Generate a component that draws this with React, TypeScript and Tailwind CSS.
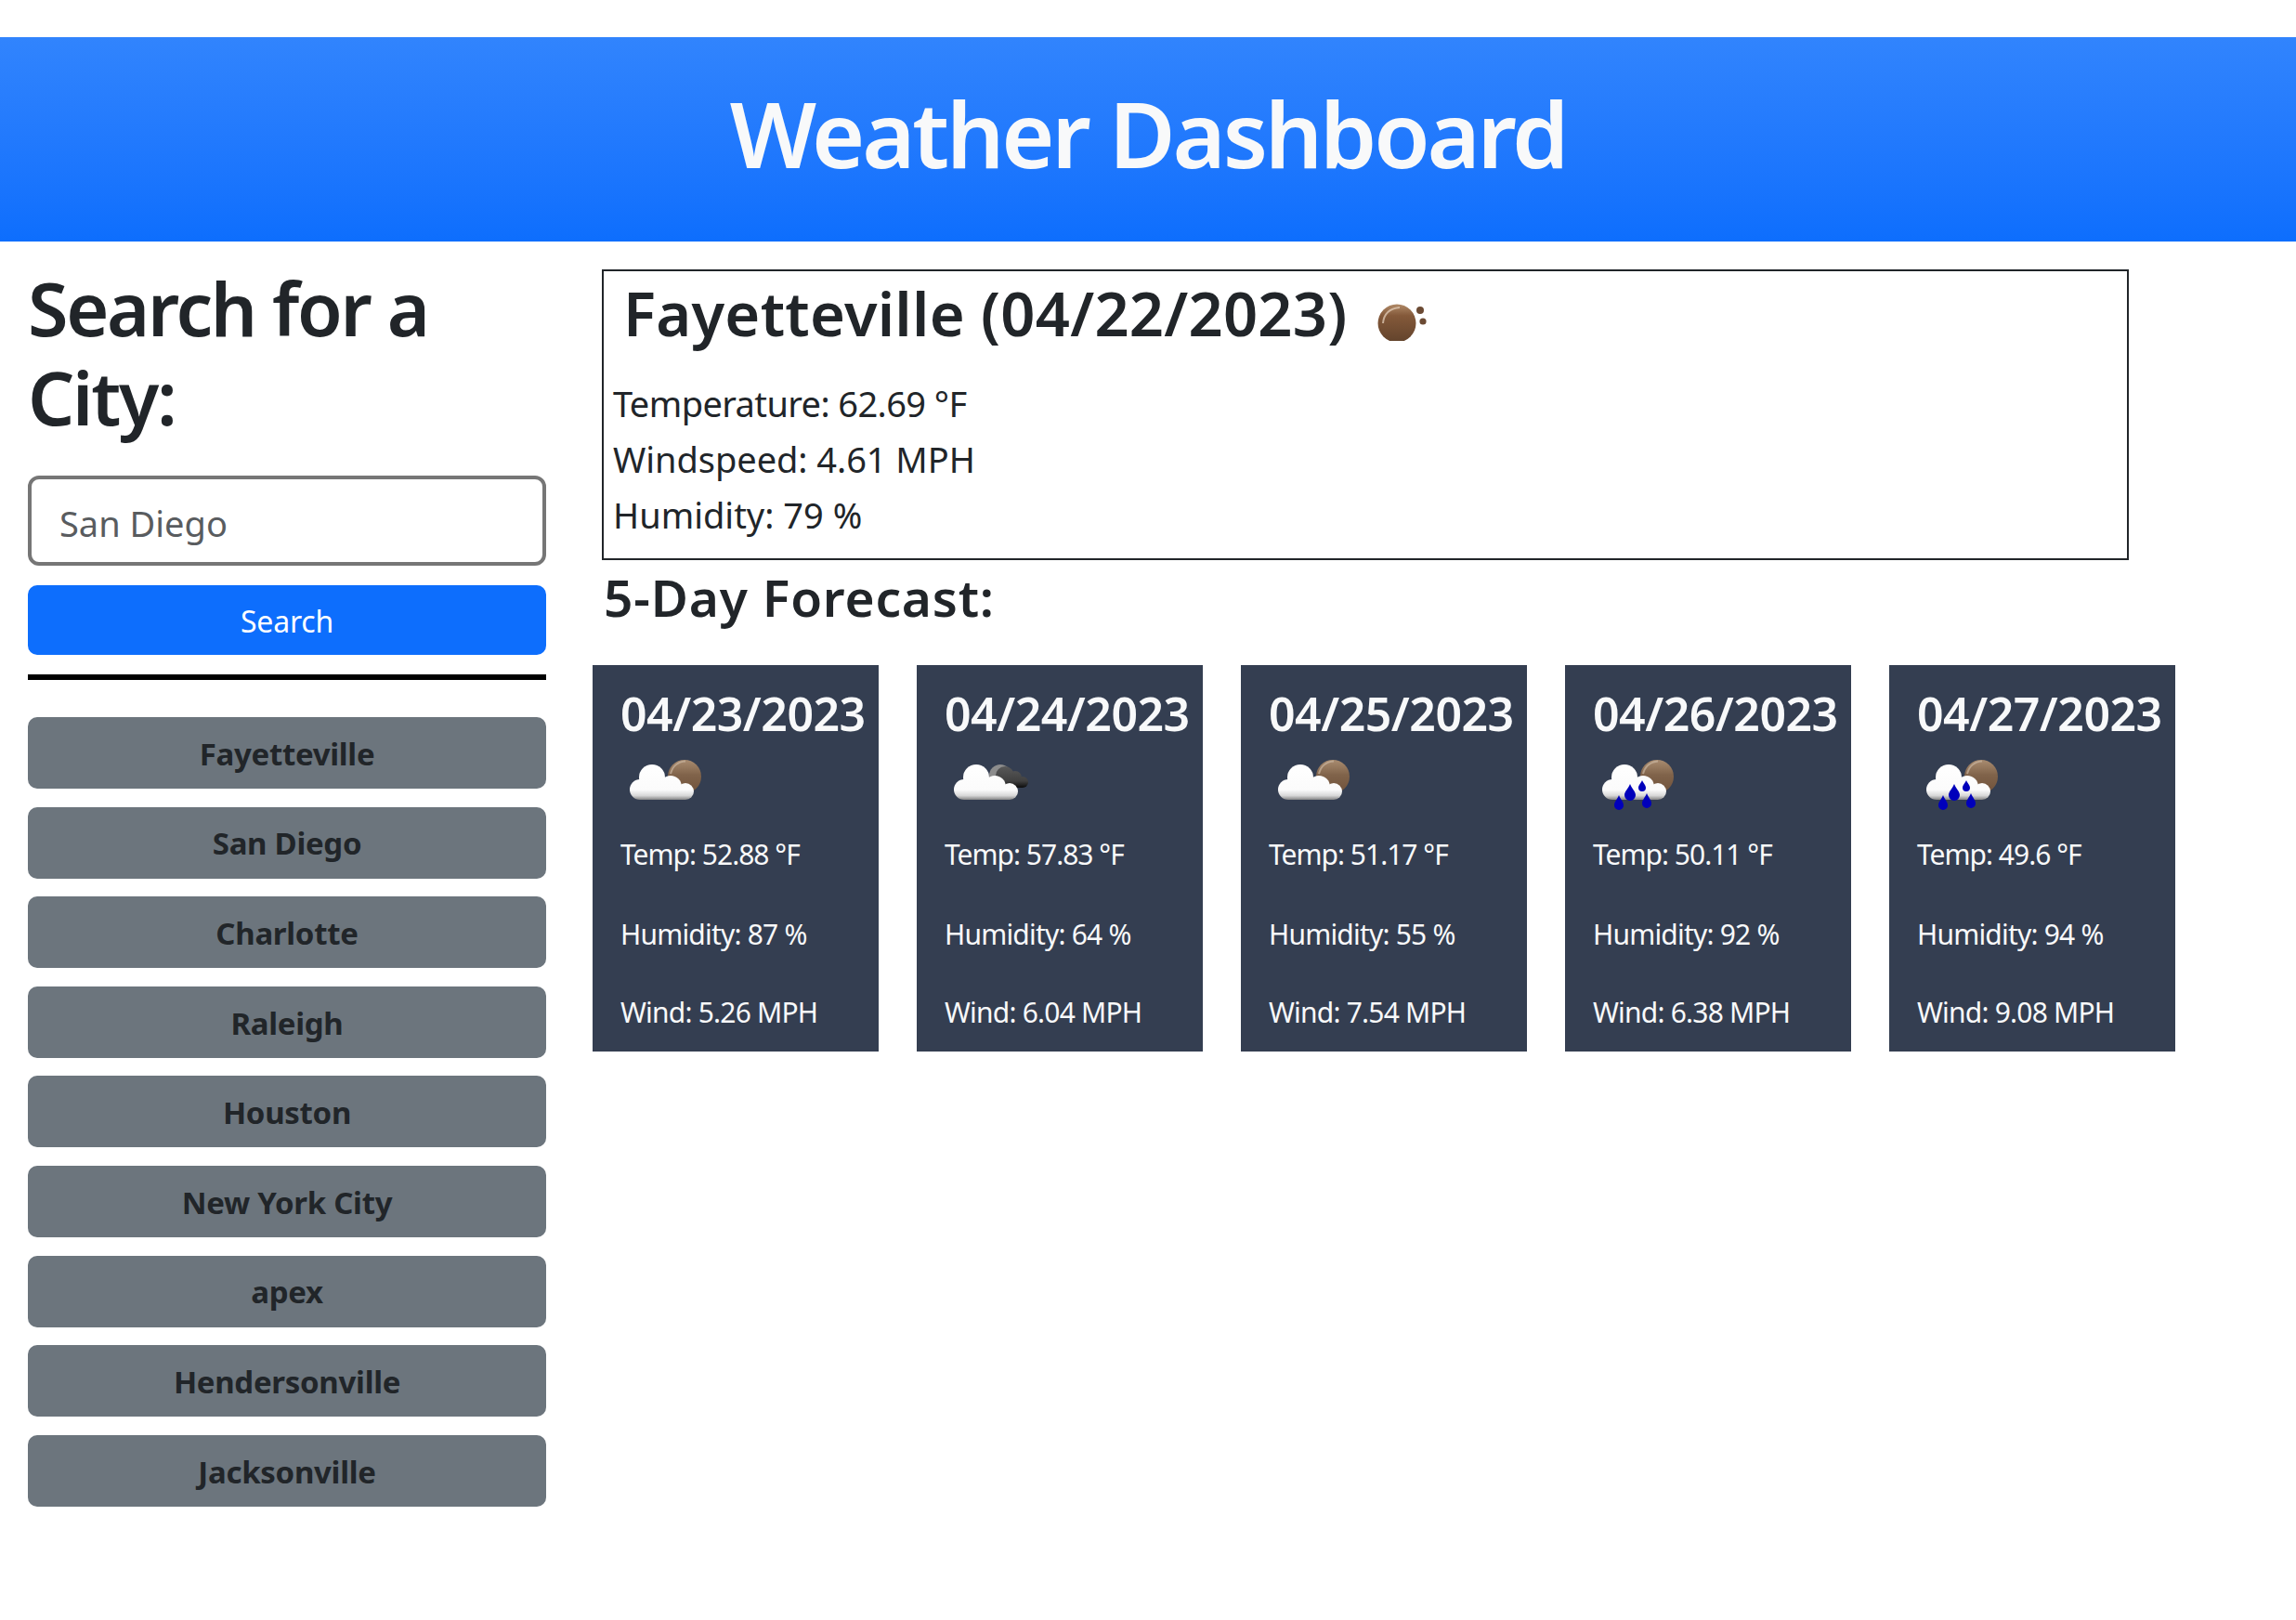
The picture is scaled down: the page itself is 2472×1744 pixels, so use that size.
import React from 'react';

type Forecast = {
  date: string;
  temp: string;
  humidity: string;
  wind: string;
  icon: 'cloudy' | 'overcast' | 'rain';
};

const cities = ['Fayetteville', 'San Diego', 'Charlotte', 'Raleigh', 'Houston', 'New York City', 'apex', 'Hendersonville', 'Jacksonville'];

const forecast: Forecast[] = [
  { date: '04/23/2023', temp: '52.88', humidity: '87', wind: '5.26', icon: 'cloudy' },
  { date: '04/24/2023', temp: '57.83', humidity: '64', wind: '6.04', icon: 'overcast' },
  { date: '04/25/2023', temp: '51.17', humidity: '55', wind: '7.54', icon: 'cloudy' },
  { date: '04/26/2023', temp: '50.11', humidity: '92', wind: '6.38', icon: 'rain' },
  { date: '04/27/2023', temp: '49.6', humidity: '94', wind: '9.08', icon: 'rain' },
];

function MoonIcon() {
  return (
    <svg width="60" height="60" viewBox="0 0 60 60" className="ml-[28px]">
      <defs>
        <linearGradient id="moonFill" x1="0" y1="0" x2="0" y2="1">
          <stop offset="0" stopColor="#b08a68" />
          <stop offset="0.3" stopColor="#84593a" />
          <stop offset="1" stopColor="#62432c" />
        </linearGradient>
      </defs>
      <g filter="blur(0.5px)">
        <circle cx="25" cy="41" r="20.5" fill="url(#moonFill)" />
        <path d="M10 41 C11 30 18 25 28 24" fill="none" stroke="#e8d4c0" strokeWidth="2" opacity="0.7" />
        <circle cx="50" cy="27" r="4" fill="#6b4a33" />
        <circle cx="53" cy="39" r="3.6" fill="#6b4a33" />
      </g>
    </svg>
  );
}

function WeatherIcon({ kind, id }: { kind: Forecast['icon']; id: number }) {
  const cloudGrad = `cloud${id}`;
  const sunGrad = `sun${id}`;
  const darkGrad = `dark${id}`;
  return (
    <svg width="112" height="76" viewBox="8 0 112 76" className="mt-[2px] shrink-0">
      <defs>
        <linearGradient id={cloudGrad} gradientUnits="userSpaceOnUse" x1="0" y1="23" x2="0" y2="61">
          <stop offset="0" stopColor="#ffffff" />
          <stop offset="0.72" stopColor="#fbfbfb" />
          <stop offset="0.88" stopColor="#d8d8d8" />
          <stop offset="1" stopColor="#858585" />
        </linearGradient>
        <linearGradient id={sunGrad} x1="0" y1="0" x2="0" y2="1">
          <stop offset="0" stopColor="#a98c70" />
          <stop offset="0.45" stopColor="#80634a" />
          <stop offset="1" stopColor="#70523b" />
        </linearGradient>
        <linearGradient id={darkGrad} gradientUnits="userSpaceOnUse" x1="0" y1="24" x2="0" y2="48">
          <stop offset="0" stopColor="#5a5a5a" />
          <stop offset="0.7" stopColor="#404040" />
          <stop offset="1" stopColor="#0c0c0c" />
        </linearGradient>
      </defs>
      <g filter="blur(0.6px)">
        {kind === 'overcast' ? (
          <g>
            <circle cx="68" cy="35" r="12" fill="#8d8d8d" />
            <g fill={`url(#${darkGrad})`}>
              <circle cx="73" cy="35" r="10" />
              <circle cx="84" cy="37" r="7" />
              <circle cx="92" cy="42" r="6" />
              <rect x="70" y="38" width="22" height="10" />
            </g>
          </g>
        ) : (
          <g>
            <circle cx="77" cy="36" r="18" fill={`url(#${sunGrad})`} />
            <path d="M62 33 C64 25 70 20 78 19.5" fill="none" stroke="#c9b5a0" strokeWidth="2" opacity="0.7" />
          </g>
        )}
        <g fill={`url(#${cloudGrad})`}>
          <circle cx="29" cy="50" r="11" />
          <circle cx="42" cy="37" r="14" />
          <circle cx="62" cy="47" r="12" />
          <circle cx="78" cy="52" r="9" />
          <rect x="29" y="45" width="49" height="16" />
        </g>
        {kind === 'rain' && (
          <g fill="#0000bb">
            <path d="M36 56 C38 61 41 63 41 67 A5 5 0 0 1 31 67 C31 63 34 61 36 56 Z" />
            <path d="M48 44 C50 49 54 52 54 56 A6 6 0 0 1 42 56 C42 52 46 49 48 44 Z" />
            <path d="M61 40 C62 43 65 45 65 48 A4 4 0 0 1 57 48 C57 45 60 43 61 40 Z" />
            <path d="M66 54 C68 59 71 61 71 65 A5 5 0 0 1 61 65 C61 61 64 59 66 54 Z" />
          </g>
        )}
      </g>
    </svg>
  );
}

function ForecastCard({ day, index }: { day: Forecast; index: number }) {
  return (
    <div className="w-[308px] h-[416px] shrink-0 bg-[#343e51] text-[#f8f9fa] pl-[30px] pt-[22px] flex flex-col">
      <h3 className="text-[50px] leading-[60px] font-semibold tracking-[-0.5px] whitespace-nowrap">{day.date}</h3>
      <WeatherIcon kind={day.icon} id={index} />
      <p className="text-[30px] leading-[60px] mt-[14px] tracking-[-1px]">Temp: {day.temp} °F</p>
      <p className="text-[30px] leading-[60px] mt-[26px] tracking-[-0.8px]">Humidity: {day.humidity} %</p>
      <p className="text-[30px] leading-[60px] mt-[24px] tracking-[-0.8px]">Wind: {day.wind} MPH</p>
    </div>
  );
}

export default function App() {
  return (
    <div className="min-h-[1744px] bg-white pt-[40px] text-[#212529] font-['Noto_Sans',sans-serif]">
      <header className="h-[220px] pb-[14px] flex items-center justify-center bg-gradient-to-b from-[#3184fd] to-[#0d6efd]">
        <h1 className="text-[98px] leading-[120px] font-semibold text-[#f8f9fa] tracking-[-3.2px]">Weather Dashboard</h1>
      </header>

      <div className="flex pl-[30px]">
        <aside className="w-[558px] shrink-0 pt-[24px]">
          <h2 className="text-[79px] leading-[96px] font-semibold tracking-[-2.3px]">Search for a City:</h2>
          <input
            readOnly
            placeholder="San Diego"
            className="mt-[36px] block w-full h-[97px] border-[4px] border-[#767676] rounded-[12px] pl-[30px] pt-[4px] text-[38px] placeholder:text-[#595c5f] outline-none"
          />
          <button className="mt-[21px] block w-full h-[75px] pt-[2px] rounded-[10px] bg-[#0d6efd] text-white text-[32px] tracking-[-0.2px]">Search</button>
          <div className="mt-[21px] h-[6px] bg-black" />
          <div className="mt-[40px] flex flex-col gap-[19.6px]">
            {cities.map((city) => (
              <button key={city} className="h-[77px] pt-[2px] rounded-[10px] bg-[#6c757d] text-[#212529] text-[33px] font-bold tracking-[-0.3px]">
                {city}
              </button>
            ))}
          </div>
        </aside>

        <main className="ml-[50px] pt-[30px]">
          <section className="ml-[10px] w-[1644px] h-[313px] border-2 border-[#212529]">
            <div className="flex items-center pl-[21px] mt-[7px] h-[76px]">
              <h2 className="text-[65px] leading-[76px] font-semibold tracking-[0.25px] whitespace-nowrap">Fayetteville (04/22/2023)</h2>
              <MoonIcon />
            </div>
            <div className="pl-[10px] mt-[29px] text-[38px] leading-[60px]">
              <p className="tracking-[-0.6px]">Temperature: 62.69 °F</p>
              <p className="tracking-[-0.05px]">Windspeed: 4.61 MPH</p>
              <p>Humidity: 79 %</p>
            </div>
          </section>
          <h3 className="ml-[12px] mt-[10px] text-[55px] leading-[60px] font-semibold tracking-[0.8px]">5-Day Forecast:</h3>
          <div className="mt-[43px] flex gap-[41px]">
            {forecast.map((day, i) => (
              <ForecastCard key={day.date} day={day} index={i} />
            ))}
          </div>
        </main>
      </div>
    </div>
  );
}
